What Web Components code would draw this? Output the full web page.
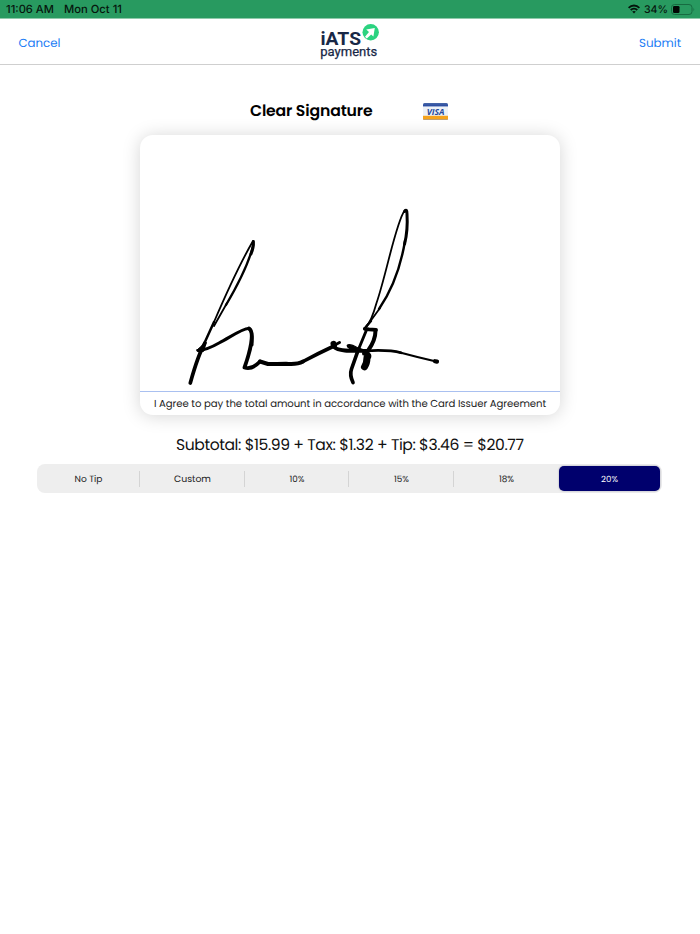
<!DOCTYPE html>
<html lang="en">
<head>
<meta charset="utf-8">
<title>Signature</title>
<style>
html,body{margin:0;height:100%;background:#fff;overflow:hidden}
body{font-family:Poppins,Inter,"Liberation Sans",sans-serif;color:#000}
</style>
</head>
<body>
<payment-page></payment-page>
<script>
function define(name, html, after) {
  const t = document.createElement('template');
  t.innerHTML = html;
  customElements.define(name, class extends HTMLElement {
    constructor() { super(); this.attachShadow({mode: 'open'}).append(t.content.cloneNode(true)); }
    connectedCallback() { if (after) after(this); }
  });
}

/* A single line of text that fills the width in `w`: by its tracking
   when `track` is set, by its font size otherwise. */
define('fit-text', `<style>
:host{display:inline-block;white-space:nowrap;font-feature-settings:"cv11";flex:none;text-rendering:geometricPrecision}
span{display:inline-block}
</style><span><slot></slot></span>`, el => {
  const w = parseFloat(el.getAttribute('w'));
  const s = el.shadowRoot.querySelector('span');
  const now = s.getBoundingClientRect().width;
  if (el.hasAttribute('track')) {
    s.style.letterSpacing = (w - now) / el.textContent.length + 'px';
  } else {
    s.style.fontSize = parseFloat(getComputedStyle(s).fontSize) * w / now + 'px';
  }
  el.style.width = w + 'px';
});

define('status-bar', `<style>
:host{display:flex;align-items:center;background:#289a60;border-bottom:1px solid #8fcaab;box-sizing:border-box;height:19px;padding:0 4px 0 6px;font:500 11px/18px Inter,sans-serif;color:#06150d}
.date{margin-left:10px}.sp{flex:1}.wifi{margin-right:4px}.bat{margin-left:3px}
svg{display:block}
</style>
<fit-text w="48">11:06 AM</fit-text><fit-text class="date" w="58">Mon Oct 11</fit-text><span class="sp"></span>
<svg class="wifi" width="12" height="10" viewBox="0 0 12 10" fill="none" stroke="#04120a" stroke-width="1.8"><path d="M.6 3.8C3.6.7 8.4.7 11.4 3.8M2.7 6C4.6 4.1 7.4 4.1 9.3 6"/><path d="M6 9.4L4.2 7.6Q6 6.2 7.8 7.6Z" fill="#04120a" stroke="none"/></svg>
<fit-text w="24">34%</fit-text>
<svg class="bat" width="25" height="11" viewBox="0 0 25 11"><rect x=".5" y=".5" width="20.5" height="10" rx="3" fill="none" stroke="#176b41"/><rect x="2" y="2" width="6.5" height="7" rx="1.3" fill="#020704"/><path d="M22.5 3.8Q24 5.5 22.5 7.2Z" fill="#176b41"/></svg>`);

define('brand-logo', `<style>
:host{display:block;width:60px;height:38px}svg{display:block;overflow:visible}
text{font-family:Roboto,sans-serif;fill:#182746}
</style><svg width="60" height="38" viewBox="320 22 60 38">
<text x="320.5" y="45" font-size="18.6" font-weight="700" textLength="40.5" lengthAdjust="spacingAndGlyphs">iATS</text>
<text x="320.3" y="56.2" font-size="13.6" font-weight="400" stroke="#182746" stroke-width=".25" textLength="57" lengthAdjust="spacingAndGlyphs">payments</text>
<circle cx="370.7" cy="32.2" r="8.2" fill="#2bd380"/>
<path d="M366.2 29.4L374.8 27.9L373.4 36.6L371.2 34.5L366.8 38.6L365 36.8L369 32.1Z" fill="#fff"/></svg>`);

define('nav-bar', `<style>
:host{display:grid;grid-template-columns:1fr 60px 1fr;align-items:center;box-sizing:border-box;height:46px;padding:0 19px 0 18.5px;border-bottom:1px solid #cfcfcf;background:#fff;color:#1a7cf5;font-size:12px}
.r{justify-self:end}brand-logo{margin-top:-1px}
fit-text{line-height:16px;margin-top:5px}
</style><fit-text w="42">Cancel</fit-text><brand-logo></brand-logo><fit-text class="r" w="42">Submit</fit-text>`);

define('visa-badge', `<style>:host{display:block;width:25px;height:17px;margin-top:1px}svg{display:block}</style>
<svg width="25" height="17" viewBox="0 0 25 17"><defs><clipPath id="c"><rect width="25" height="17" rx="1.5"/></clipPath><linearGradient id="b" x2="0" y2="1"><stop stop-color="#4a68a8"/><stop offset="1" stop-color="#2346a0"/></linearGradient></defs>
<g clip-path="url(#c)"><rect width="25" height="17" fill="#edf1f7"/><rect width="25" height="3.4" fill="url(#b)"/><rect y="12.8" width="25" height="4.2" fill="#f5a31c"/><rect y="16" width="25" height="1" fill="#bfa173"/></g>
<text x="3.7" y="11.6" font-family="Open Sans" font-size="9.6" font-style="italic" font-weight="700" textLength="17.8" lengthAdjust="spacingAndGlyphs" fill="#274b9c">VISA</text></svg>`);

define('signature-ink', `<style>:host{display:block;height:256px}svg{display:block}</style>
<svg width="420" height="256" viewBox="140 135 420 256" fill="none" stroke="#000" stroke-linecap="round" stroke-linejoin="round">
<path stroke-width="1.8" d="M253 241C242 260 226 294 214 322"/>
<path stroke-width="2.3" d="M253 246C248 266 236 288 226 305"/>
<path stroke-width="1.8" d="M227 303L214 326"/>
<path stroke-width="3" d="M253.4 241.5Q253.8 247 251 254"/>
<path stroke-width="2.5" d="M214 322Q209 333 204 344"/>
<path stroke-width="3.7" d="M205 343C199 353 195 366 190.3 383"/>
<path stroke-width="3.1" d="M198 350.5Q207 350 219 343C232 336 244 327.5 249 328.5Q253 331 252 345"/>
<path stroke-width="3.8" d="M249 328.5C255 332 250 352 244.5 367.5Q252 370 260 361.5"/>
<path fill="#000" stroke-width="1" d="M197 350L206 342L204 351Q198 354 197 350Z"/>
<path stroke-width="4" d="M260 361.5L268 364Q277 364 286 363.7Q297 364.8 303 361.5"/>
<path stroke-width="3.6" d="M303 361.5Q319 353 333 346.5"/>
<path stroke-width="6" d="M333.5 343.8L334 345.5"/>
<path stroke-width="3" d="M334 345.5L339.5 342.5"/>
<path stroke-width="3.8" d="M334 347C339 352 354 350.8 368 350.8"/>
<path stroke-width="2.7" d="M366 350.8Q389 349.5 401 352.8"/>
<path stroke-width="2.2" d="M399 352.2Q417 357 434 361"/>
<path stroke-width="4.2" d="M435 361.2L437 361.6"/>
<path fill="#000" stroke-width="1.4" d="M347.3 345.5Q349 343 358 348L369 352L357 351Q347 348.5 347.3 345.5Z"/>
<path stroke-width="1.8" d="M404.5 210.8C396 222 386 276 376.5 303C374 312 371 322 366 327"/>
<path stroke-width="3" d="M404.5 211.5Q407 208 407 214Q408 230 404.6 244"/>
<path stroke-width="2.4" d="M405 241C400 271 390 293 379 309"/>
<path stroke-width="1.8" d="M380 308Q373 318 365 328"/>
<path stroke-width="2.4" d="M371 321L365 328"/>
<path stroke-width="2.9" d="M366.5 330L357 353"/>
<path stroke-width="3.7" d="M357.5 352L351.5 369Q349.4 375 353 382.5"/>
<path stroke-width="3.8" d="M364.8 328.8L369 329.4L376 329.8"/>
<path stroke-width="4" d="M375.5 330.5Q375.5 340 368.5 350"/>
<path stroke-width="4" d="M364 353.5Q370 353 369.3 357"/>
<path stroke-width="7" d="M367 357.5Q367 363 364.5 366.8"/>
</svg>`);

define('signature-card', `<style>
:host{display:flex;flex-direction:column;box-sizing:border-box;width:420px;height:280px;border-radius:13px;background:#fff;box-shadow:0 1px 18px rgba(0,0,0,.17);align-self:center}
.terms{display:flex;align-items:center;justify-content:center;flex:1;padding-top:1px;border-top:1px solid #a9c0f0;font-size:10.15px;line-height:22px;color:#222}
</style><signature-ink></signature-ink><div class="terms"><slot></slot></div>`);

define('tip-option', `<style>
:host{display:flex;align-items:center;justify-content:center;position:relative;font-size:9px;color:#222;border-radius:5px;line-height:14px;padding-top:2px}
:host([line])::after{content:"";position:absolute;right:0;top:7px;height:16px;width:1px;background:#d4d4d4}
:host([selected]){background:#00006d;color:#fff;margin:2px 1px 2px 0;box-shadow:0 0 2px rgba(0,0,60,.35)}
</style><slot></slot>`);

define('tip-selector', `<style>
:host{display:grid;grid-template-columns:103px 105px 104px 105px 105px 102px;box-sizing:border-box;width:625px;height:29px;border-radius:8px;background:#eee;overflow:hidden}
</style>
<tip-option line><fit-text w="28">No Tip</fit-text></tip-option>
<tip-option line><fit-text w="37">Custom</fit-text></tip-option>
<tip-option line><fit-text w="15">10%</fit-text></tip-option>
<tip-option line><fit-text w="15">15%</fit-text></tip-option>
<tip-option><fit-text w="15.2">18%</fit-text></tip-option>
<tip-option selected><fit-text w="17">20%</fit-text></tip-option>`);

define('payment-page', `<style>
:host{display:flex;flex-direction:column;height:934px}
main{display:flex;flex-direction:column;padding:37px 0 0 37px}
.head{display:flex;align-items:center;height:17px;margin:0 0 16px 213px;gap:50px;font-size:15.7px;font-weight:600;line-height:20px}
.head fit-text{margin-top:3px}
signature-card{margin-right:37px}
.total{display:flex;margin:21px 0 8px 139px;font-size:15.6px;line-height:20px;color:#111}
</style>
<status-bar></status-bar><nav-bar></nav-bar>
<main>
<div class="head"><fit-text track w="122.5">Clear Signature</fit-text><visa-badge></visa-badge></div>
<signature-card><fit-text track w="392">I Agree to pay the total amount in accordance with the Card Issuer Agreement</fit-text></signature-card>
<div class="total"><fit-text track w="347.5">Subtotal: $15.99 + Tax: $1.32 + Tip: $3.46 = $20.77</fit-text></div>
<tip-selector></tip-selector>
</main>`);
</script>
</body>
</html>
